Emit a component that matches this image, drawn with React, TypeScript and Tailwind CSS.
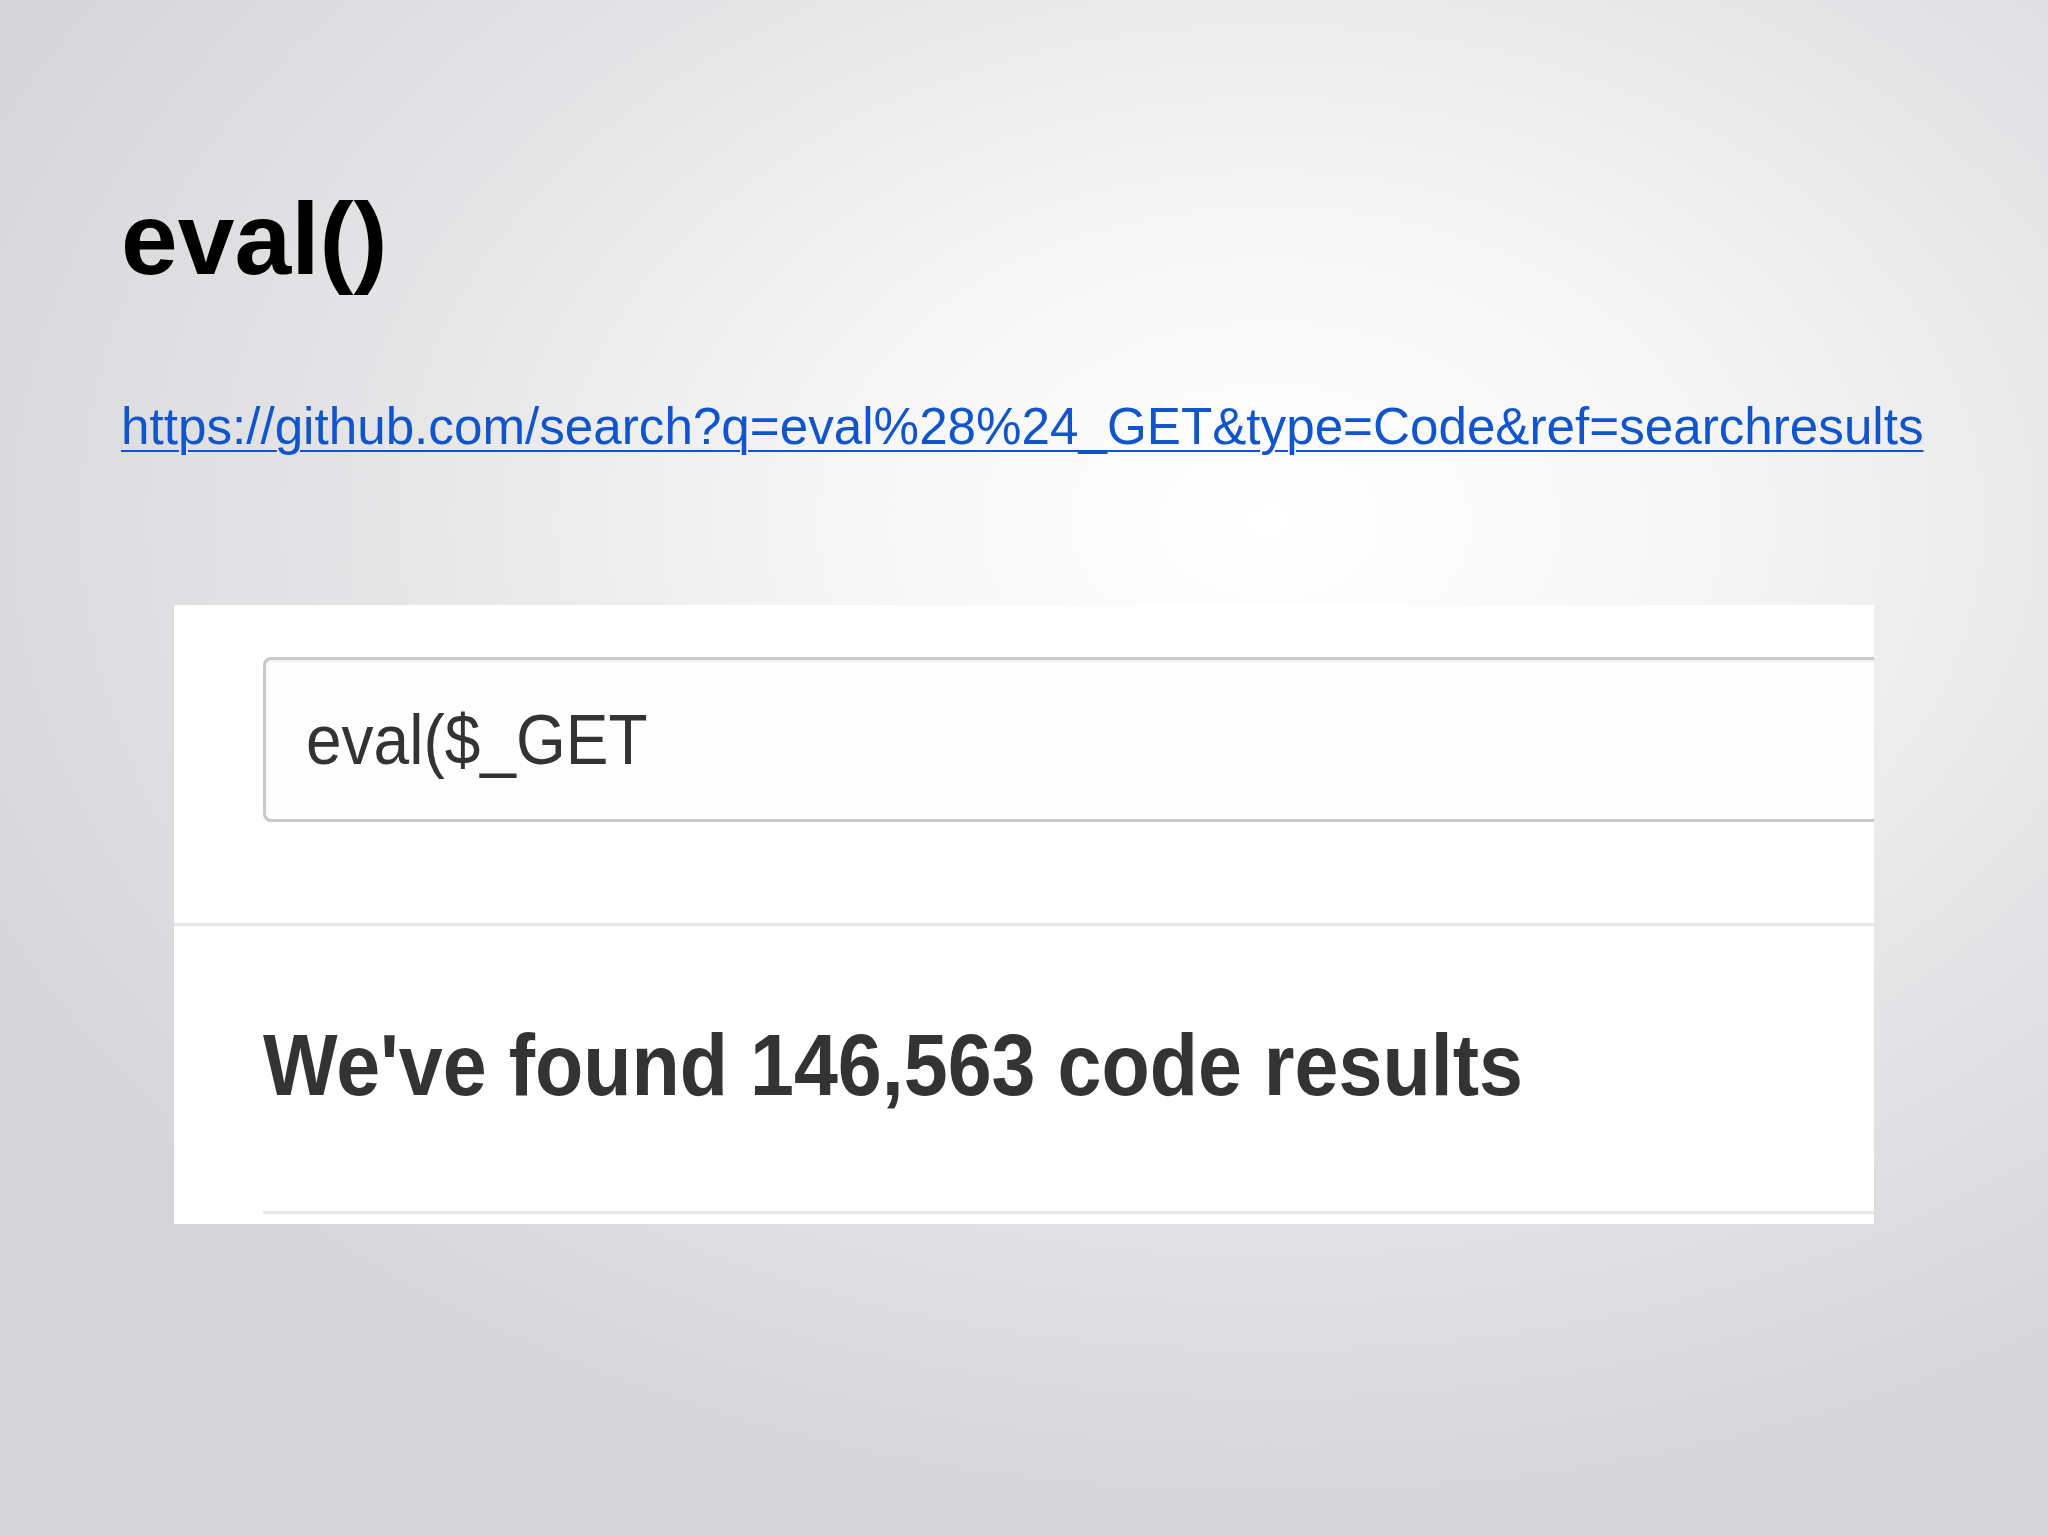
export default function App() {
  return (
    <div className="flex h-[1536px] w-full flex-col bg-[radial-gradient(ellipse_70%_65%_at_62%_34%,#ffffff_0%,#f6f6f7_30%,#e4e4e6_65%,#d6d6da_100%)] pl-[121px] pt-[188px] font-['Liberation_Sans',Arial,sans-serif]">
      <h1 className="text-[102px] leading-none font-bold text-black">eval()</h1>
      <a
        href="#"
        className="mt-[111px] self-start text-[51.2px] leading-none text-[#1155cc] underline decoration-[2px] underline-offset-[6px]"
      >
        https://github.com/search?q=eval%28%24_GET&amp;type=Code&amp;ref=searchresults
      </a>

      <div className="mt-[153px] ml-[53px] flex h-[619px] w-[1700px] flex-col overflow-hidden bg-white">
        <div className="flex h-[318px] shrink-0 items-start pl-[89px] pt-[52px]">
          <div className="flex h-[165px] w-[1700px] shrink-0 items-center rounded-[8px] border-[3px] border-[#c9c9cb] bg-[#fefefe] pl-[40px] shadow-[inset_0_2px_3px_rgba(0,0,0,0.06)]">
            <span className="inline-block scale-y-[1.1] text-[64px] leading-none text-[#333]">eval($_GET</span>
          </div>
        </div>
        <div className="h-[3px] shrink-0 bg-[#e6e6e8]" />
        <div className="flex flex-1 flex-col pl-[89px] pt-[99px]">
          <span className="inline-block self-start scale-y-[1.1] text-[79px] leading-none font-bold text-[#333]">
            We've found 146,563 code results
          </span>
          <div className="mt-[107px] h-[3px] bg-[#e8e8ea]" />
        </div>
      </div>
    </div>
  );
}
